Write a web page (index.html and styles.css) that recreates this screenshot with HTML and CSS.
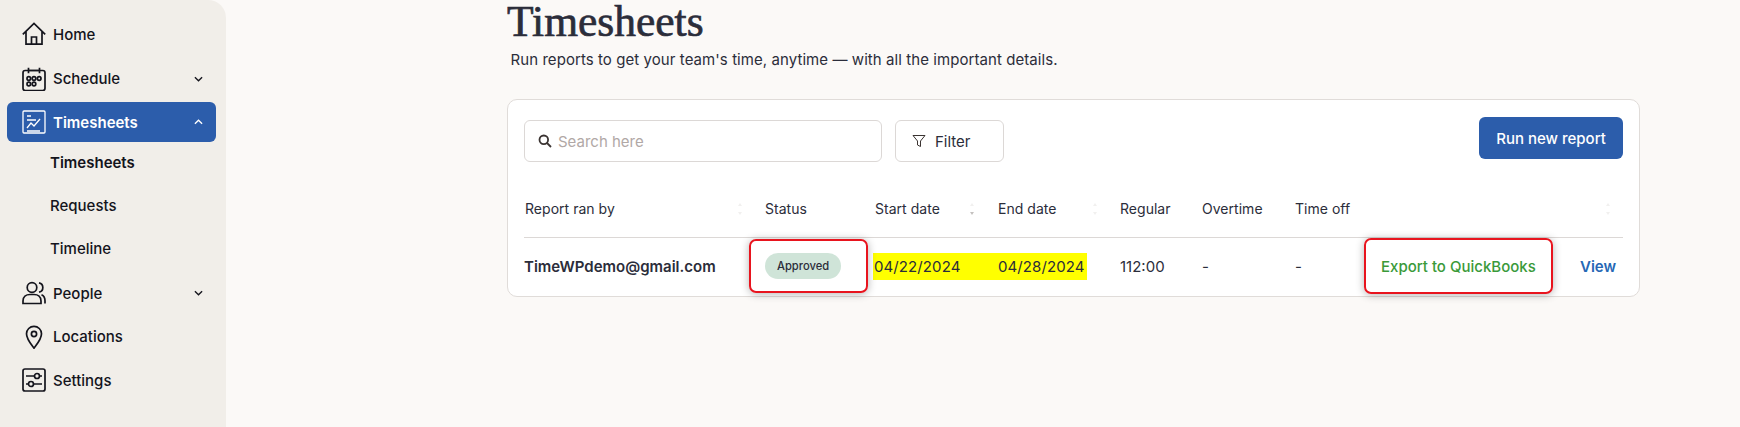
FILE: index.html
```html
<!DOCTYPE html>
<html lang="en">
<head>
<meta charset="utf-8">
<title>Timesheets</title>
<link rel="stylesheet" href="styles.css">
</head>
<body>
<div class="app">
  <aside class="sidebar">
    <nav class="nav">
      <a class="item first">
        <svg class="icon" viewBox="0 0 24 24"><path d="M.8 12.300 12 1.500l11.200 10.800M4 9.500v12.700h16V9.500M9.500 22.200v-7.200h5v7.200"/></svg>
        <span class="label">Home</span>
      </a>
      <a class="item">
        <svg class="icon" viewBox="0 0 24 24"><rect x="1" y="3.500" width="22" height="20" rx="2.200"/><path d="M6.500.8v5.400M17.500.8v5.400M6.500 3.500h11"/><circle cx="6.800" cy="11.500" r="1.800"/><circle cx="12" cy="11.500" r="1.800"/><circle cx="17.200" cy="11.500" r="1.800"/><circle cx="6.800" cy="17" r="1.800"/><circle cx="12" cy="17" r="1.800"/></svg>
        <span class="label">Schedule</span>
        <svg class="chev" viewBox="0 0 10 6"><path d="M1 1l4 4 4-4"/></svg>
      </a>
      <a class="item active">
        <svg class="icon thin" viewBox="0 0 24 24"><rect x="1" y="1" width="22" height="22" rx="1"/><path d="M5 6h4M5 10h9M5 18l4-5 3 3 6-7M5 21h13"/></svg>
        <span class="label">Timesheets</span>
        <svg class="chev" viewBox="0 0 10 6"><path d="M1 5l4-4 4 4"/></svg>
      </a>
      <div class="sub">
        <a class="subitem current">Timesheets</a>
        <a class="subitem">Requests</a>
        <a class="subitem">Timeline</a>
      </div>
      <a class="item">
        <svg class="icon" viewBox="0 0 24 24"><circle cx="10" cy="6.500" r="4.800"/><path d="M1 22.500v-2.500c0-4 3-6.500 7-6.500h4c4 0 7 2.500 7 6.500v2.500zM17 1.800a4.800 4.800 0 0 1 0 9.400M19.500 13.800c2.200 1 3.500 3 3.500 6v2.700"/></svg>
        <span class="label">People</span>
        <svg class="chev" viewBox="0 0 10 6"><path d="M1 1l4 4 4-4"/></svg>
      </a>
      <a class="item">
        <svg class="icon" viewBox="0 0 24 24"><path d="M12 23.200C8 18 4.500 14 4.500 8.800a7.500 7.500 0 0 1 15 0c0 5.200-3.500 9.200-7.500 14.400z"/><circle cx="12" cy="9" r="2.600"/></svg>
        <span class="label">Locations</span>
      </a>
      <a class="item">
        <svg class="icon" viewBox="0 0 24 24"><rect x="1" y="1" width="22" height="22" rx="2"/><circle cx="15" cy="8" r="2.500"/><circle cx="9" cy="16" r="2.500"/><path d="M4 8h8.500M17.500 8H20M4 16h2.500M11.500 16H20"/></svg>
        <span class="label">Settings</span>
      </a>
    </nav>
  </aside>

  <main class="main">
    <h1 class="title">Timesheets</h1>
    <p class="lead">Run reports to get your team's time, anytime — with all the important details.</p>

    <section class="card">
      <div class="toolbar">
        <div class="search">
          <svg class="search-icon" viewBox="0 0 14 14"><circle cx="5.800" cy="5.800" r="4.300"/><path d="M9 9l4 4"/></svg>
          <span class="placeholder">Search here</span>
        </div>
        <button class="filter">
          <svg class="filter-icon" viewBox="0 0 14 14"><path d="M1 1.500h12L8.500 7v5.500l-3-1.500V7z"/></svg>
          Filter
        </button>
        <button class="run">Run new report</button>
      </div>

      <div class="table">
        <div class="thead">
          <div class="th shift">Report ran by<span class="sort"></span></div>
          <div class="th">Status</div>
          <div class="th shift">Start date<span class="sort down"></span></div>
          <div class="th shift">End date<span class="sort"></span></div>
          <div class="th">Regular</div>
          <div class="th">Overtime</div>
          <div class="th">Time off</div>
          <div class="th"></div>
          <div class="th"><span class="sort last"></span></div>
        </div>
        <div class="tbody">
          <div class="td email">TimeWPdemo@gmail.com</div>
          <div class="td marked"><span class="badge">Approved</span><span class="box box-status"></span></div>
          <div class="td"><span class="hl hl-start">04/22/2024</span></div>
          <div class="td"><span class="hl hl-end">04/28/2024</span></div>
          <div class="td">112:00</div>
          <div class="td">-</div>
          <div class="td">-</div>
          <div class="td marked"><a class="export">Export to QuickBooks</a><span class="box box-export"></span></div>
          <div class="td"><a class="view">View</a></div>
        </div>
      </div>
    </section>
  </main>
</div>
</body>
</html>
```

FILE: styles.css
```css
* { box-sizing: border-box; }
html, body { margin: 0; height: 100%; }
body {
  background: #fbf9f7;
  color: #2b2d3a;
  font-family: Inter, "Liberation Sans", sans-serif;
  overflow: hidden;
}
.app { display: flex; height: 427px; }

.sidebar {
  width: 226px;
  flex: none;
  background: #f1eee9;
  border-top-right-radius: 18px;
  padding: 14px 10px 0 7px;
}
.nav { display: flex; flex-direction: column; }
.item {
  display: flex;
  align-items: center;
  height: 40px;
  margin-bottom: 3.500px;
  padding: 0 13px 0 14.500px;
  border-radius: 6px;
  color: #14141c;
  font-size: 15px;
  font-weight: 450;
}
.item.first { margin-bottom: 4.500px; }
.label { margin-left: 7.500px; flex: 1; }
.icon {
  width: 24px;
  height: 24px;
  fill: none;
  stroke: currentColor;
  stroke-width: 1.700;
  flex: none;
}
.icon.thin { stroke-width: 1.300; }
.chev {
  width: 9px;
  height: 6px;
  fill: none;
  stroke: currentColor;
  stroke-width: 1.500;
  flex: none;
}
.item.active { background: #2c5dab; color: #fff; font-weight: 600; }
.sub { display: flex; flex-direction: column; margin: -5px 0 3.500px; }
.subitem {
  display: flex;
  align-items: center;
  height: 43px;
  padding-left: 43px;
  font-size: 15px;
  font-weight: 450;
  color: #14141c;
}
.subitem.current { font-weight: 600; }

.main { width: 1133px; margin-left: 281px; }
.title {
  margin: 0;
  font-family: "Liberation Serif", serif;
  font-size: 43.500px;
  line-height: 42px;
  font-weight: 400;
  color: #2b2d3a;
  -webkit-text-stroke: 0.700px #2b2d3a;
}
.lead {
  margin: 8px 0 0 3.500px;
  font-size: 15px;
  line-height: 20px;
  letter-spacing: .07px;
  color: #2b2d3a;
}

.card {
  margin-top: 29px;
  background: #fff;
  border: 1px solid #e0dcd9;
  border-radius: 10px;
  height: 198px;
  padding: 17px 16px 0 16px;
}
.toolbar { display: flex; align-items: flex-start; height: 46px; }
.search {
  display: flex;
  align-items: center;
  width: 358px;
  height: 42px;
  margin-top: 3px;
  border: 1px solid #dcd8d6;
  border-radius: 6px;
  padding-left: 13px;
}
.search-icon { width: 14px; height: 14px; fill: none; stroke: #3b3432; stroke-width: 1.800; }
.placeholder { margin-left: 6px; font-size: 15px; color: #b1a8a6; }
.filter {
  display: flex;
  align-items: center;
  width: 109px;
  height: 42px;
  margin: 3px 0 0 13px;
  padding: 0 0 0 16px;
  background: #fff;
  border: 1px solid #dcd8d6;
  border-radius: 6px;
  font: inherit;
  font-size: 15px;
  color: #2b2d3a;
}
.filter-icon { width: 14px; height: 14px; margin-right: 9px; fill: none; stroke: #3b3432; stroke-width: 1; }
.run {
  margin-left: auto;
  width: 144px;
  height: 42px;
  border: 0;
  border-radius: 6px;
  background: #2c5dab;
  color: #fff;
  font: inherit;
  font-size: 15px;
  font-weight: 500;
}

.table { margin-top: 18px; font-size: 14px; letter-spacing: .03px; }
.thead, .tbody {
  display: grid;
  grid-template-columns: 241px 109px 123px 123px 82px 93px 86px 199px 42px;
  align-items: center;
}
.thead { height: 57px; border-bottom: 1px solid #dcd8d6; }
.tbody { height: 56px; font-size: 15px; letter-spacing: 0; }
.th { position: relative; height: 20px; line-height: 20px; }
.shift { padding-left: 1px; }
.sort {
  position: absolute;
  right: 22px;
  top: 4px;
  width: 5px;
  height: 12px;
}
.sort.last { right: 11px; }
.sort::before, .sort::after {
  content: "";
  position: absolute;
  left: 0;
  border-left: 2.500px solid transparent;
  border-right: 2.500px solid transparent;
}
.sort::before { top: 0; border-bottom: 3px solid #f1f0ef; }
.sort::after { bottom: 0; border-top: 3px solid #f1f0ef; }
.sort.down::after { border-top-color: #c4c1bf; }
.email { font-weight: 600; }
.marked { position: relative; }
.badge {
  display: inline-block;
  height: 26px;
  line-height: 26px;
  padding: 0 12px;
  border-radius: 13px;
  background: #cfe4d8;
  font-size: 11.200px;
  font-weight: 500;
}
.hl { display: block; height: 27px; line-height: 27px; background: #ffff00; letter-spacing: .1px; }
.hl-start { margin-left: -1px; padding-left: 1px; }
.hl-end { margin-right: 33px; padding-left: 1px; }
.export { color: #3a9a3a; font-weight: 450; }
.view { color: #2567b5; font-weight: 600; }
.box {
  position: absolute;
  border: 2px solid #e8141e;
  border-radius: 7px;
  box-shadow: 0 1px 8px rgba(0, 0, 0, .3);
  pointer-events: none;
}
.box-status { left: -16px; top: calc(50% - 27px); width: 119px; height: 54px; }
.box-export { left: -17px; top: calc(50% - 28px); width: 189px; height: 56px; }
```
